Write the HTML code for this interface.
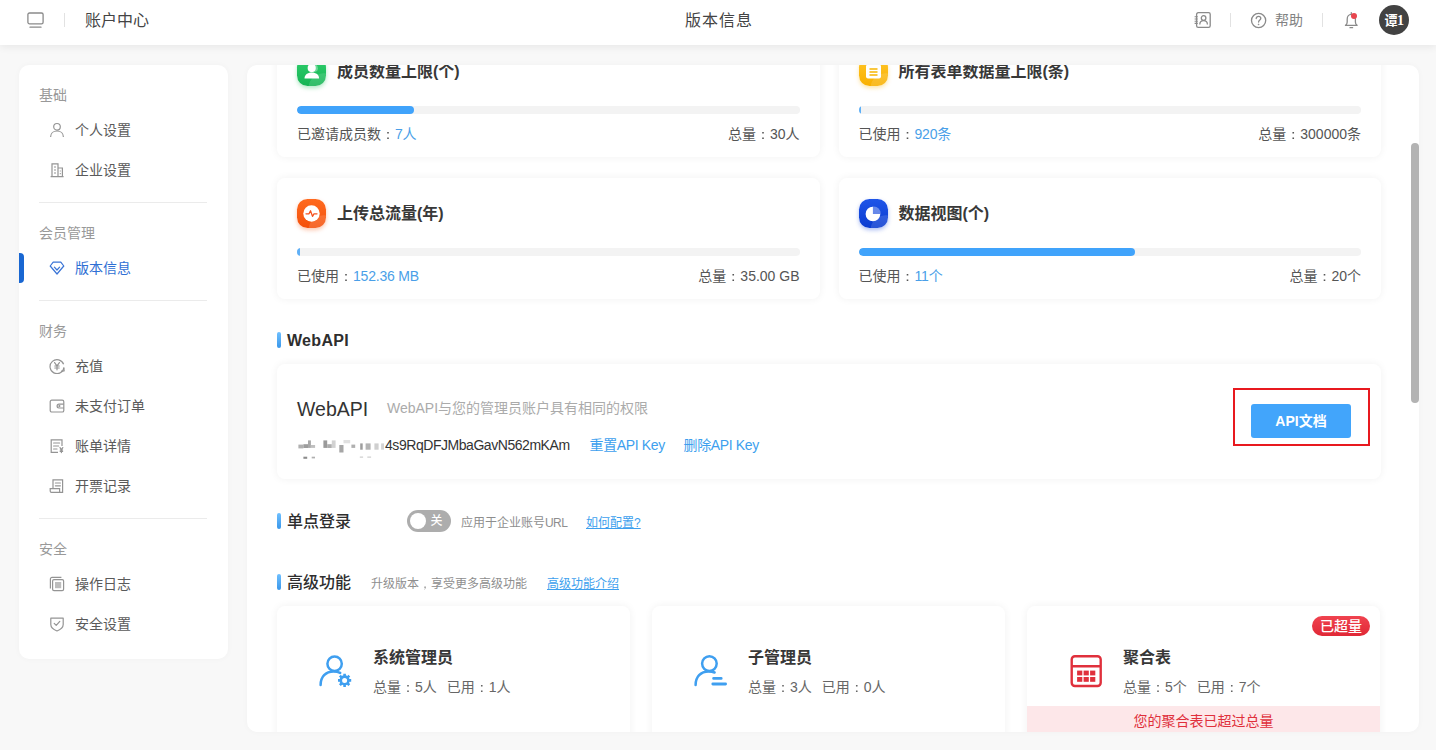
<!DOCTYPE html>
<html lang="zh-CN">
<head>
<meta charset="utf-8">
<title>版本信息</title>
<style>
*{box-sizing:border-box;margin:0;padding:0}
html,body{width:1436px;height:750px;overflow:hidden}
body{background:#f8f8f8;font-family:"Liberation Sans","Noto Sans CJK SC",sans-serif;font-size:14px;color:#333;position:relative}
a{color:#3d9fee;text-decoration:none}
.abs{position:absolute}
.t{position:absolute;white-space:nowrap;line-height:20px;height:20px}
/* header */
#hd{position:absolute;left:0;top:0;width:1436px;height:45px;background:#fff;box-shadow:0 2px 8px rgba(0,0,0,.07);z-index:5}
.vdiv{position:absolute;width:1px;background:#e2e2e2}
/* sidebar */
#sb{position:absolute;left:19px;top:65px;width:208.500px;height:594px;background:#fff;border-radius:10px;box-shadow:0 0 6px rgba(0,0,0,.03)}
.grp{position:absolute;left:20px;color:#999;font-size:14px;line-height:20px;height:20px}
.it{position:absolute;left:56px;color:#5a5a5a;font-size:14px;line-height:20px;height:20px;white-space:nowrap}
.it.on{color:#2f6fd4}
.ico{position:absolute;left:30px;width:16px;height:16px}
.hr{position:absolute;left:20px;width:168px;height:1px;background:#ebebeb}
/* main */
#mn{position:absolute;left:247px;top:65px;width:1172px;height:667px;background:#fff;border-radius:10px;overflow:hidden;box-shadow:0 0 6px rgba(0,0,0,.03)}
.card{position:absolute;background:#fff;border-radius:8px;box-shadow:0 0 8px rgba(0,0,0,.06)}
.sq{position:absolute;width:29px;height:29px;border-radius:10.500px;overflow:hidden}
.sq::after{content:"";position:absolute;right:-9px;bottom:-11px;width:27px;height:23px;border-radius:50%;background:rgba(255,255,255,.13);transform:rotate(-35deg)}
.sq svg{position:relative;z-index:1}
.ct{position:absolute;font-size:16px;font-weight:700;color:#383838;line-height:22px;white-space:nowrap}
.pb{position:absolute;height:8px;border-radius:4px;background:#f3f3f3;overflow:hidden}
.pf{position:absolute;left:0;top:0;height:8px;border-radius:4px;background:#40a3fb}
.st{position:absolute;font-size:14px;color:#555;line-height:20px;white-space:nowrap}
.st b{font-weight:400;color:#4a9fe8;letter-spacing:-0.2px}
.sec{position:absolute;width:4px;height:16px;border-radius:2px;background:linear-gradient(#6fc0ff,#3a97ea)}
.sh{position:absolute;font-size:16px;font-weight:700;color:#2e2e2e;line-height:22px;white-space:nowrap;margin-top:1px}
.c{font-style:normal;line-height:0;font-family:"WenQuanYi Zen Hei","Noto Sans CJK SC",sans-serif}
</style>
</head>
<body>
<div id="hd">
<svg class="abs" style="left:27px;top:12px" width="17" height="17" viewBox="0 0 17 17" fill="none" stroke="#8a8a8a" stroke-width="1.3"><rect x="0.9" y="1" width="15.2" height="10.8" rx="1.6"/><path d="M3 15.2h11" stroke-linecap="round"/></svg>
<div class="vdiv" style="left:64px;top:13px;height:14px"></div>
<div class="t" style="left:85px;top:10px;font-size:16px;color:#444;line-height:22px;height:22px">账户中心</div>
<div class="t" style="left:619px;width:200px;text-align:center;top:10px;font-size:16px;color:#444;line-height:22px;height:22px;letter-spacing:1px">版本信息</div>
<svg class="abs" style="left:1194px;top:12px" width="17" height="16" viewBox="0 0 17 16" fill="none" stroke="#8a8a8a" stroke-width="1.3"><rect x="2.6" y="0.7" width="13.6" height="14.6" rx="1.6"/><path d="M0.600 4.800h3.200M0.600 7h3.200M0.600 9.200h3.200M0.600 11.400h3.200" stroke-width="1.100"/><circle cx="9.6" cy="6" r="2.3"/><path d="M5.8 12.6c0-2.4 1.6-3.9 3.8-3.9s3.8 1.5 3.8 3.9"/></svg>
<div class="vdiv" style="left:1230px;top:13px;height:14px"></div>
<svg class="abs" style="left:1250px;top:12px" width="17" height="17" viewBox="0 0 17 17" fill="none" stroke="#8a8a8a" stroke-width="1.3"><circle cx="8.600" cy="8.500" r="7.100"/><path d="M6.2 6.6c0-1.4 1-2.3 2.3-2.3s2.3.9 2.3 2.1c0 1.5-2.2 1.8-2.2 3.6" stroke-linecap="round"/><circle cx="8.6" cy="12.4" r="0.5" fill="#8a8a8a" stroke-width="0.6"/></svg>
<div class="t" style="left:1275px;top:10px;font-size:14px;color:#828282">帮助</div>
<div class="vdiv" style="left:1322px;top:13px;height:14px"></div>
<svg class="abs" style="left:1343px;top:11px" width="17" height="18" viewBox="0 0 17 18" fill="none" stroke="#8a8a8a" stroke-width="1.3"><path d="M2.500 14.400c1.200-.8 1.700-1.800 1.700-3.400V8.200c0-2.800 1.800-4.800 4.100-4.800s4.100 2 4.100 4.800V11c0 1.600.5 2.600 1.700 3.400zM7 16.700h2.600M8.300 1.600v1.700" stroke-linecap="round" stroke-linejoin="round"/><circle cx="11" cy="5" r="3" fill="#e8464f" stroke="none"/></svg>
<div class="abs" style="left:1379px;top:5px;width:30px;height:30px;border-radius:50%;background:#424242;color:#fff;font-size:13px;font-weight:700;line-height:32px;text-align:center;letter-spacing:-0.500px">谭<span style="font-family:'Liberation Serif',serif;font-size:14px">1</span></div>
</div>
<div id="sb">
<div class="grp" style="top:20px">基础</div>
<svg class="ico" style="top:57px" viewBox="0 0 16 16" fill="none" stroke="#949494" stroke-width="1.2"><circle cx="8" cy="4.8" r="3.3"/><path d="M1.6 15c0-3.6 2.8-6 6.4-6s6.4 2.4 6.4 6"/></svg>
<div class="it" style="top:55px">个人设置</div>
<svg class="ico" style="top:97px" viewBox="0 0 16 16" fill="none" stroke="#949494" stroke-width="1.2"><path d="M3 14.5V1.8h6v12.7M9 6h4.4v8.5M1.6 14.6h13M5 5h2M5 8h2M5 11h2M10.8 9h1M10.8 11.6h1"/></svg>
<div class="it" style="top:95px">企业设置</div>
<div class="hr" style="top:137px"></div>
<div class="grp" style="top:158px">会员管理</div>
<div class="abs" style="left:0;top:188px;width:5px;height:30px;background:#1967d2;border-radius:0 4px 4px 0"></div>
<svg class="ico" style="top:195px" viewBox="0 0 16 16" fill="none" stroke="#3a74d6" stroke-width="1.2"><path d="M4.2 2.2h7.6l3 3.8L8 14 1.2 6z" stroke-linejoin="round"/><path d="M5.4 7.2L8 10l2.6-2.8" stroke-linejoin="round" stroke-linecap="round"/></svg>
<div class="it on" style="top:193px">版本信息</div>
<div class="hr" style="top:235px"></div>
<div class="grp" style="top:256px">财务</div>
<svg class="ico" style="top:293px" viewBox="0 0 16 16" fill="none" stroke="#949494" stroke-width="1.2"><path d="M14.6 6.2A7 7 0 1 0 15 9.4"/><path d="M5.6 4.6L8 7.8l2.4-3.2M8 7.8v4M5.8 8h4.4M5.8 10h4.4M12.6 13.2l2.6-.4-.4-2.4" stroke-linecap="round" stroke-linejoin="round"/></svg>
<div class="it" style="top:291px">充值</div>
<svg class="ico" style="top:333px" viewBox="0 0 16 16" fill="none" stroke="#949494" stroke-width="1.2"><rect x="1.2" y="2.2" width="13.6" height="11.8" rx="1.6"/><path d="M14.8 6.2H10a1.9 1.9 0 0 0 0 3.8h4.8"/><circle cx="10.4" cy="8.1" r="0.5"/></svg>
<div class="it" style="top:331px">未支付订单</div>
<svg class="ico" style="top:373px" viewBox="0 0 16 16" fill="none" stroke="#949494" stroke-width="1.2"><path d="M13 8V1.8H2.2v12.6H9"/><path d="M4.6 5h6M4.6 8h5M4.6 11h3.4M11 9.6l1.4 2 1.4-2M12.4 11.6v3M11.2 12h2.4M11.2 13.4h2.4" stroke-linecap="round"/></svg>
<div class="it" style="top:371px">账单详情</div>
<svg class="ico" style="top:413px" viewBox="0 0 16 16" fill="none" stroke="#949494" stroke-width="1.2"><path d="M4 10V1.8h9.6v12.6H2.4c-.8 0-1.2-.6-1.2-1.4V10.6h9.4v2.6c0 .8.6 1.2 1.2 1.2"/><path d="M6.4 5h5M6.4 7.8h5" stroke-linecap="round"/></svg>
<div class="it" style="top:411px">开票记录</div>
<div class="hr" style="top:453px"></div>
<div class="grp" style="top:474px">安全</div>
<svg class="ico" style="top:511px" viewBox="0 0 16 16" fill="none" stroke="#949494" stroke-width="1.2"><rect x="3.6" y="3.6" width="11" height="11" rx="1.4"/><path d="M12.4 1.4H3a1.6 1.6 0 0 0-1.6 1.6v9.4"/><rect x="6" y="6" width="6.2" height="6.2" fill="#bdbdbd" stroke="none"/></svg>
<div class="it" style="top:509px">操作日志</div>
<svg class="ico" style="top:551px" viewBox="0 0 16 16" fill="none" stroke="#949494" stroke-width="1.2"><path d="M1.800 2.200h12.400v6.200c0 3.200-2.600 5-6.200 6.600-3.600-1.600-6.200-3.400-6.200-6.600z" stroke-linejoin="round"/><path d="M5.200 7.400l2 2 3.600-4" stroke-linecap="round" stroke-linejoin="round"/></svg>
<div class="it" style="top:549px">安全设置</div>
</div>
<div id="mn">
<div class="card" style="left:30px;top:-29px;width:542.5px;height:121px">
<div class="sq" style="left:20px;top:21px;background:linear-gradient(#2fcf6c,#16b455);box-shadow:0 2px 4px rgba(30,190,90,.35)"><svg width="29" height="29" viewBox="0.500 0.500 29 29" style="display:block"><circle cx="17.600" cy="11.800" r="3.800" fill="#fff" opacity=".35"/><circle cx="15.200" cy="11.600" r="4.100" fill="#fff"/><path d="M8 21.900c0-3.800 3-6 7.300-6s7.300 2.200 7.300 6z" fill="#fff"/></svg></div>
<div class="ct" style="left:60px;top:25px">成员数量上限(个)</div>
<div class="pb" style="left:20px;top:70px;width:502.5px"><div class="pf" style="width:117px"></div></div>
<div class="st" style="left:20px;top:88px">已邀请成员数<i class="c">：</i><b>7人</b></div>
<div class="st" style="right:20px;top:88px">总量<i class="c">：</i>30人</div>
</div>
<div class="card" style="left:591.5px;top:-29px;width:542.5px;height:121px">
<div class="sq" style="left:20px;top:21px;background:linear-gradient(#ffc62a,#f9b000);box-shadow:0 2px 4px rgba(250,180,0,.35)"><svg width="29" height="29" viewBox="0.500 0.500 29 29" style="display:block"><rect x="7.500" y="8" width="15" height="14" rx="2" fill="#fff"/><path d="M11 12.500h8M11 15.500h8M11 18.500h8" stroke="#f7b500" stroke-width="1.400"/></svg></div>
<div class="ct" style="left:60px;top:25px">所有表单数据量上限(条)</div>
<div class="pb" style="left:20px;top:70px;width:502.5px"><div class="pf" style="width:2.500px;border-radius:0;background:#5fb0f7"></div></div>
<div class="st" style="left:20px;top:88px">已使用<i class="c">：</i><b>920条</b></div>
<div class="st" style="right:20px;top:88px">总量<i class="c">：</i>300000条</div>
</div>
<div class="card" style="left:30px;top:113px;width:542.5px;height:121px">
<div class="sq" style="left:20px;top:21px;background:linear-gradient(#ff6a1f,#f4500b);box-shadow:0 2px 4px rgba(245,90,20,.35)"><svg width="29" height="29" viewBox="0.500 0.500 29 29" style="display:block"><circle cx="15" cy="15" r="8.200" fill="#fff"/><path d="M9.500 15.300h3l1.500-3 2 5.600 1.500-2.600h3" fill="none" stroke="#f4511e" stroke-width="1.300" stroke-linejoin="round" stroke-linecap="round"/></svg></div>
<div class="ct" style="left:60px;top:25px">上传总流量(年)</div>
<div class="pb" style="left:20px;top:70px;width:502.5px"><div class="pf" style="width:2.500px;border-radius:0;background:#5fb0f7"></div></div>
<div class="st" style="left:20px;top:88px">已使用<i class="c">：</i><b>152.36 MB</b></div>
<div class="st" style="right:20px;top:88px">总量<i class="c">：</i>35.00 GB</div>
</div>
<div class="card" style="left:591.5px;top:113px;width:542.5px;height:121px">
<div class="sq" style="left:20px;top:21px;background:linear-gradient(#1f55e8,#0a3bd0);box-shadow:0 2px 4px rgba(20,70,220,.35)"><svg width="29" height="29" viewBox="0.500 0.500 29 29" style="display:block"><circle cx="15.300" cy="14.700" r="6.800" fill="#fff" opacity=".35"/><path d="M14.400 8.200a7.300 7.300 0 1 0 7.300 7.300H14.400z" fill="#fff"/></svg></div>
<div class="ct" style="left:60px;top:25px">数据视图(个)</div>
<div class="pb" style="left:20px;top:70px;width:502.5px"><div class="pf" style="width:276px"></div></div>
<div class="st" style="left:20px;top:88px">已使用<i class="c">：</i><b>11个</b></div>
<div class="st" style="right:20px;top:88px">总量<i class="c">：</i>20个</div>
</div>
<div class="sec" style="left:30px;top:267px"></div><div class="sh" style="left:40px;top:264px;letter-spacing:.3px">WebAPI</div>
<div class="card" style="left:30px;top:299px;width:1104px;height:115px">
<div class="t" style="left:20px;top:31px;font-size:19.500px;line-height:28px;height:28px;color:#333">WebAPI</div>
<div class="t" style="left:110px;top:34px;font-size:14px;color:#ababab">WebAPI与您的管理员账户具有相同的权限</div>
<svg class="abs" style="left:20px;top:74px;filter:blur(.5px)" width="90" height="24" viewBox="0 0 90 24"><rect x="1.4" y="6.6" width="5.0" height="3.8" fill="#b0b0b0"/><rect x="6.4" y="6.2" width="4.6" height="3.8" fill="#9c9c9c"/><rect x="11.0" y="2.4" width="2.9" height="7.5" fill="#a8a8a8"/><rect x="13.9" y="7.0" width="4.2" height="2.9" fill="#c0c0c0"/><rect x="26.4" y="2.4" width="3.8" height="7.5" fill="#9a9a9a"/><rect x="30.2" y="6.2" width="4.6" height="3.8" fill="#adadad"/><rect x="34.8" y="2.4" width="3.8" height="7.5" fill="#d2d2d2"/><rect x="42.3" y="7.0" width="4.2" height="7.5" fill="#a6a6a6"/><rect x="46.5" y="2.0" width="6.7" height="3.3" fill="#e0e0e0"/><rect x="54.4" y="6.6" width="3.8" height="3.3" fill="#b0b0b0"/><rect x="63.2" y="5.4" width="2.5" height="6.3" fill="#9e9e9e"/><rect x="68.6" y="5.4" width="5.0" height="6.3" fill="#b4b4b4"/><rect x="77.4" y="5.4" width="4.2" height="6.3" fill="#cfcfcf"/><rect x="84.1" y="5.4" width="2.9" height="6.3" fill="#d4d4d4"/><rect x="6.4" y="18.7" width="3.8" height="2.1" fill="#8c8c8c"/><rect x="14.7" y="18.7" width="3.3" height="1.7" fill="#b0b0b0"/><rect x="62.8" y="18.6" width="3.3" height="1.0" fill="#c4c4c4"/><rect x="70.3" y="18.6" width="3.8" height="1.0" fill="#c4c4c4"/></svg>
<div class="t" style="left:108px;top:71px;font-size:14px;color:#333;letter-spacing:-0.45px">4s9RqDFJMbaGavN562mKAm</div>
<a class="t" style="left:312.500px;top:71px;letter-spacing:-0.35px">重置API Key</a>
<a class="t" style="left:406.500px;top:71px;letter-spacing:-0.35px">删除API Key</a>
<div class="abs" style="left:956px;top:24px;width:137px;height:58px;border:2px solid #e8191f"></div>
<div class="abs" style="left:974px;top:40px;width:100px;height:34px;border-radius:3px;background:#42a5fb;color:#fff;font-size:14px;font-weight:700;line-height:34px;text-align:center">API文档</div>
</div>
<div class="sec" style="left:30px;top:448px"></div><div class="sh" style="left:40px;top:445px;font-weight:500">单点登录</div>
<div class="abs" style="left:160px;top:445px;width:44px;height:22px;border-radius:11px;background:#adadad"><div class="abs" style="left:3px;top:3px;width:16px;height:16px;border-radius:50%;background:#fff"></div><div class="t" style="left:23.500px;top:1px;font-size:12px;color:#fff;font-weight:500">关</div></div>
<div class="t" style="left:214px;top:448px;font-size:12px;color:#8e8e8e">应用于企业账号<span style="letter-spacing:-0.600px">URL</span></div>
<a class="t" style="left:339px;top:448px;font-size:12px;text-decoration:underline">如何配置?</a>
<div class="sec" style="left:30px;top:509px"></div><div class="sh" style="left:40px;top:506px;font-weight:500">高级功能</div>
<div class="t" style="left:124px;top:509px;font-size:12px;color:#8e8e8e">升级版本<i class="c">，</i>享受更多高级功能</div>
<a class="t" style="left:300px;top:509px;font-size:12px;text-decoration:underline">高级功能介绍</a>
<div class="card" style="left:30px;top:541px;width:353px;height:150px;overflow:hidden">
<div class="abs" style="left:42px;top:48px;width:34px;height:34px"><svg width="34" height="34" viewBox="0 0 34 34" fill="none" stroke="#3f9ff0" stroke-width="2.500"><circle cx="15.600" cy="9.800" r="7.200"/><path d="M1.600 31c0-8 5-13.600 13-13.600 2.600 0 4.800.5 6.600 1.500" stroke-linecap="round"/><circle cx="25.600" cy="26.400" r="3.800" stroke-width="2.600"/><path d="M25.600 19.800v2.200M25.600 30.800v2.200M19 26.400h2.200M30 26.400h2.200M20.900 21.700l1.600 1.600M28.700 29.500l1.600 1.600M20.900 31.100l1.600-1.600M28.700 23.300l1.600-1.600" stroke-width="2.600"/></svg></div>
<div class="ct" style="left:96px;top:41px">系统管理员</div>
<div class="st" style="left:96px;top:71px;color:#666">总量<i class="c">：</i>5人<span style="margin-left:10px"></span>已用<i class="c">：</i>1人</div>
</div>
<div class="card" style="left:405px;top:541px;width:353px;height:150px;overflow:hidden">
<div class="abs" style="left:42px;top:48px;width:34px;height:34px"><svg width="34" height="34" viewBox="0 0 34 34" fill="none" stroke="#3f9ff0" stroke-width="2.500"><circle cx="15.400" cy="9.600" r="7.300"/><path d="M1.600 31c0-8 5-13.600 13-13.600 2.400 0 4.400.4 6 1.100" stroke-linecap="round"/><path d="M19.600 24.400h7.600M18.800 30h12.800" stroke-linecap="round" stroke-width="2.800"/></svg></div>
<div class="ct" style="left:96px;top:41px">子管理员</div>
<div class="st" style="left:96px;top:71px;color:#666">总量<i class="c">：</i>3人<span style="margin-left:10px"></span>已用<i class="c">：</i>0人</div>
</div>
<div class="card" style="left:780px;top:541px;width:353px;height:150px;overflow:hidden">
<div class="abs" style="left:42px;top:48px;width:34px;height:34px"><svg width="34" height="34" viewBox="-1.500 -1 34 34" fill="none" stroke="#e0303c" stroke-width="2.400"><rect x="1.200" y="1.200" width="29" height="29.800" rx="3.200"/><path d="M1.200 11.200h29"/><g fill="#e0303c" stroke="none"><rect x="6.600" y="15.600" width="5.200" height="4.800"/><rect x="13.100" y="15.600" width="5.200" height="4.800"/><rect x="19.600" y="15.600" width="5.200" height="4.800"/><rect x="6.600" y="22" width="5.200" height="4.800"/><rect x="13.100" y="22" width="5.200" height="4.800"/><rect x="19.600" y="22" width="5.200" height="4.800"/></g></svg></div>
<div class="ct" style="left:96px;top:41px">聚合表</div>
<div class="st" style="left:96px;top:71px;color:#666">总量<i class="c">：</i>5个<span style="margin-left:10px"></span>已用<i class="c">：</i>7个</div><div class="abs" style="left:285px;top:10px;width:58px;height:20px;border-radius:10px;background:linear-gradient(#f0434f,#e02836);color:#fff;font-size:14px;font-weight:500;line-height:20px;text-align:center">已超量</div>
<div class="abs" style="left:0;top:100px;width:353px;height:50px;background:#fde7e9;color:#e0303c;font-size:14px;line-height:30px;text-align:center">您的聚合表已超过总量</div>
</div>
<div class="abs" style="left:1164px;top:78px;width:8px;height:260px;border-radius:4px;background:#b3b3b3"></div>
</div>
</body>
</html>
